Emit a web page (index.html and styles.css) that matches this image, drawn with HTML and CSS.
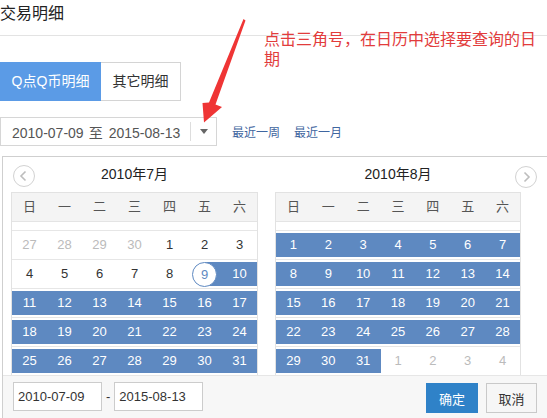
FILE: index.html
```html
<!DOCTYPE html>
<html lang="zh-CN">
<head>
<meta charset="UTF-8">
<title>交易明细</title>
<link rel="stylesheet" href="styles.css">
</head>
<body>

<div class="page">
  <h2 class="page-title">交易明细</h2>
  <p class="tip">点击三角号，在日历中选择要查询的日期</p>

  <!-- tabs -->
  <div class="tabs">
    <a class="tab tab-active">Q点Q币明细</a>
    <a class="tab tab-plain">其它明细</a>
  </div>

  <!-- date range + quick links -->
  <div class="range-row">
    <div class="range-box">
      <span class="range-text">2010-07-09<span class="range-to">至</span>2015-08-13</span>
      <span class="range-toggle"><i class="caret"></i></span>
    </div>
    <a class="quick">最近一周</a>
    <a class="quick">最近一月</a>
  </div>

  <!-- calendar dropdown -->
  <div class="picker">
    <button class="nav nav-prev" type="button">
      <svg width="20" height="20" viewBox="0 0 20 20"><path d="M11.5 5.5 L7 10 L11.5 14.5" fill="none" stroke="#bdbdbd" stroke-width="1.6"/></svg>
    </button>
    <button class="nav nav-next" type="button">
      <svg width="20" height="20" viewBox="0 0 20 20"><path d="M8.5 5.5 L13 10 L8.5 14.5" fill="none" stroke="#bdbdbd" stroke-width="1.6"/></svg>
    </button>

    <div class="months">
      <div class="month month-left">
        <div class="month-title">2010年7月</div>
        <div class="cal">
          <div class="week"><span>日</span><span>一</span><span>二</span><span>三</span><span>四</span><span>五</span><span>六</span></div>
          <div class="week-gap"></div>
          <div class="row"><span class="off">27</span><span class="off">28</span><span class="off">29</span><span class="off">30</span><span>1</span><span>2</span><span>3</span></div>
          <div class="row"><span>4</span><span>5</span><span>6</span><span>7</span><span>8</span><span class="start"><b>9</b></span><span class="sel">10</span></div>
          <div class="row"><span class="sel">11</span><span class="sel">12</span><span class="sel">13</span><span class="sel">14</span><span class="sel">15</span><span class="sel">16</span><span class="sel">17</span></div>
          <div class="row"><span class="sel">18</span><span class="sel">19</span><span class="sel">20</span><span class="sel">21</span><span class="sel">22</span><span class="sel">23</span><span class="sel">24</span></div>
          <div class="row"><span class="sel">25</span><span class="sel">26</span><span class="sel">27</span><span class="sel">28</span><span class="sel">29</span><span class="sel">30</span><span class="sel">31</span></div>
        </div>
      </div>
      <div class="month month-right">
        <div class="month-title">2010年8月</div>
        <div class="cal">
          <div class="week"><span>日</span><span>一</span><span>二</span><span>三</span><span>四</span><span>五</span><span>六</span></div>
          <div class="week-gap"></div>
          <div class="row"><span class="sel">1</span><span class="sel">2</span><span class="sel">3</span><span class="sel">4</span><span class="sel">5</span><span class="sel">6</span><span class="sel">7</span></div>
          <div class="row"><span class="sel">8</span><span class="sel">9</span><span class="sel">10</span><span class="sel">11</span><span class="sel">12</span><span class="sel">13</span><span class="sel">14</span></div>
          <div class="row"><span class="sel">15</span><span class="sel">16</span><span class="sel">17</span><span class="sel">18</span><span class="sel">19</span><span class="sel">20</span><span class="sel">21</span></div>
          <div class="row"><span class="sel">22</span><span class="sel">23</span><span class="sel">24</span><span class="sel">25</span><span class="sel">26</span><span class="sel">27</span><span class="sel">28</span></div>
          <div class="row"><span class="sel">29</span><span class="sel">30</span><span class="sel">31</span><span class="off">1</span><span class="off">2</span><span class="off">3</span><span class="off">4</span></div>
        </div>
      </div>
    </div>

    <div class="picker-foot">
      <input class="date-input" type="text" value="2010-07-09">
      <span class="dash">-</span>
      <input class="date-input" type="text" value="2015-08-13">
      <button class="btn btn-ok" type="button">确定</button>
      <button class="btn btn-cancel" type="button">取消</button>
    </div>
  </div>

  <!-- red pointer towards the dropdown triangle -->
  <svg class="tip-arrow" viewBox="0 0 547 418">
    <polygon points="243.5,19 245.5,20.5 215.5,104.5 222,107 204,122.5 202.5,103 209,102.5" fill="#ef3535"/>
  </svg>
</div>

</body>
</html>
```

FILE: styles.css
```css
html, body {
  margin: 0;
  padding: 0;
  overflow: hidden;
}
body {
  font-family: "Liberation Sans", "Noto Sans CJK SC", sans-serif;
  color: #333;
  background-color: #fff;
}
.page {
  position: relative;
  width: 547px;
  height: 418px;
  overflow: hidden;
}
.page-title {
  margin: 0;
  height: 35px;
  line-height: 28px;
  font-size: 16px;
  font-weight: normal;
  color: #222;
  border-bottom: 1px solid #e3e3e3;
}
.tip {
  position: absolute;
  left: 264px;
  top: 30px;
  width: 283px;
  margin: 0;
  font-size: 16px;
  line-height: 20px;
  color: #e23c3c;
}
.tip-arrow {
  position: absolute;
  left: 0;
  top: 0;
  width: 547px;
  height: 418px;
  pointer-events: none;
}

/* tabs */
.tabs {
  display: flex;
  margin-top: 26px;
}
.tab {
  height: 39px;
  line-height: 39px;
  font-size: 14px;
  text-align: center;
  box-sizing: border-box;
}
.tab-active {
  width: 101px;
  background-color: #5b9be6;
  color: #fff;
}
.tab-plain {
  width: 80px;
  line-height: 37px;
  border: 1px solid #d4d4d4;
  border-left: none;
  color: #333;
}

/* range box */
.range-row {
  display: flex;
  align-items: center;
  margin-top: 16px;
  height: 29px;
}
.range-box {
  display: flex;
  align-items: center;
  width: 217px;
  height: 29px;
  box-sizing: border-box;
  border: 1px solid #d6d6d6;
}
.range-text {
  padding-left: 11px;
  font-size: 14px;
  color: #555;
}
.range-to {
  margin: 0 6px 0 5px;
}
.range-toggle {
  margin-left: auto;
  width: 25px;
  height: 19px;
  border-left: 1px solid #ddd;
  display: flex;
  justify-content: center;
  align-items: center;
}
.caret {
  width: 0;
  height: 0;
  border-left: 4.5px solid transparent;
  border-right: 4.5px solid transparent;
  border-top: 5px solid #666;
}
.quick {
  margin-left: 15px;
  font-size: 12px;
  color: #3f66a0;
}
.quick + .quick {
  margin-left: 14px;
}

/* calendar panel */
.picker {
  position: relative;
  margin-top: 10px;
  margin-left: 2px;
  width: 547px;
  box-sizing: border-box;
  border: 1px solid #cfcfcf;
  border-bottom: none;
}
.nav {
  position: absolute;
  top: 8px;
  width: 22px;
  height: 22px;
  padding: 0;
  border: 1px solid #d2d2d2;
  border-radius: 50%;
  background-color: #fff;
  display: flex;
  justify-content: center;
  align-items: center;
}
.nav-prev {
  left: 10px;
}
.nav-next {
  left: 512px;
  top: 9px;
}
.months {
  display: flex;
  gap: 17px;
  padding-left: 8px;
}
.month-left {
  width: 247px;
}
.month-right {
  width: 246px;
}
.month-title {
  height: 35px;
  line-height: 35px;
  text-align: center;
  font-size: 14px;
  color: #222;
}
.cal {
  border: 1px solid #e2e2e2;
  border-bottom: none;
}
.week,
.row {
  display: grid;
  grid-template-columns: repeat(7, 1fr);
  text-align: center;
}
.week {
  height: 28px;
  line-height: 28px;
  background-color: #f4f4f4;
  border-bottom: 1px solid #e4e4e4;
  font-size: 13px;
  color: #555;
}
.week-gap {
  height: 8px;
}
.row {
  border-top: 1px solid #e6e6e6;
  padding: 2px 0;
}
.row span {
  height: 24px;
  line-height: 24px;
  font-size: 13px;
  color: #333;
}
.row .sel {
  background-color: #5e89c1;
  color: #fff;
}
.row .off {
  color: #bbb;
}
.row .start {
  display: flex;
  justify-content: center;
  align-items: center;
  background: linear-gradient(to right, transparent 50%, #5e89c1 50%);
}
.start b {
  width: 23px;
  height: 23px;
  line-height: 23px;
  font-weight: normal;
  border: 1px solid #5e89c1;
  border-radius: 50%;
  background-color: #fff;
  color: #5e89c1;
}

/* footer with inputs and buttons */
.picker-foot {
  display: flex;
  align-items: flex-start;
  border-top: 1px solid #e6e6e6;
  background-color: #f7f7f7;
  padding: 6px 11px 12px 10px;
}
.date-input {
  width: 89px;
  height: 29px;
  box-sizing: border-box;
  border: 1px solid #ccc;
  padding: 0 4px;
  font-family: "Liberation Sans", "Noto Sans CJK SC", sans-serif;
  font-size: 13px;
  color: #333;
  background-color: #fff;
  outline: none;
}
.dash {
  margin: 0 4px;
  line-height: 29px;
  font-size: 13px;
  color: #333;
}
.btn {
  height: 30px;
  margin-top: 1px;
  padding: 0;
  box-sizing: border-box;
  font-family: "Liberation Sans", "Noto Sans CJK SC", sans-serif;
  font-size: 13px;
}
.btn-ok {
  margin-left: auto;
  width: 52px;
  border: none;
  background-color: #2f82c8;
  color: #fff;
}
.btn-cancel {
  margin-left: 8px;
  width: 51px;
  border: 1px solid #c9c9c9;
  background-color: #f6f6f6;
  color: #333;
}
```
